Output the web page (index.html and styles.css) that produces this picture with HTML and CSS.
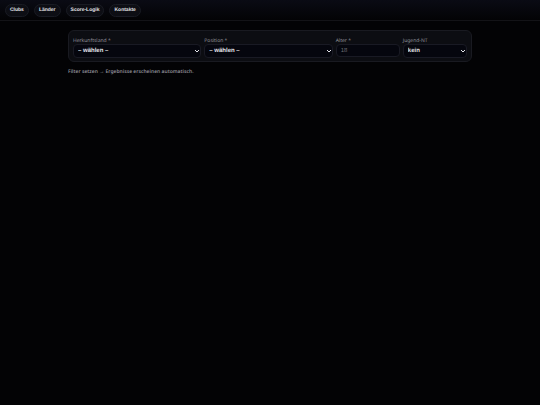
FILE: index.html
```html
<!DOCTYPE html>
<html lang="de">
<head>
<meta charset="utf-8">
<meta name="viewport" content="width=device-width, initial-scale=1">
<title>Clubs</title>
<link rel="stylesheet" href="styles.css">
</head>
<body>
<header class="topbar">
  <nav class="nav">
    <button class="pill" type="button">Clubs</button>
    <button class="pill" type="button">Länder</button>
    <button class="pill" type="button">Score-Logik</button>
    <button class="pill" type="button">Kontakte</button>
  </nav>
</header>
<main class="page">
  <form class="filters">
    <div class="field">
      <label for="country">Herkunftsland *</label>
      <div class="choice">
        <select id="country"><option>– wählen –</option></select>
        <svg class="chevron" viewBox="0 0 6 4" aria-hidden="true"><path d="M1 1l2 2 2-2"/></svg>
      </div>
    </div>
    <div class="field">
      <label for="position">Position *</label>
      <div class="choice">
        <select id="position"><option>– wählen –</option></select>
        <svg class="chevron" viewBox="0 0 6 4" aria-hidden="true"><path d="M1 1l2 2 2-2"/></svg>
      </div>
    </div>
    <div class="field">
      <label for="age">Alter *</label>
      <input id="age" type="text" inputmode="numeric" placeholder="18">
    </div>
    <div class="field">
      <label for="youth">Jugend-NT</label>
      <div class="choice">
        <select id="youth"><option>kein</option></select>
        <svg class="chevron" viewBox="0 0 6 4" aria-hidden="true"><path d="M1 1l2 2 2-2"/></svg>
      </div>
    </div>
  </form>
  <p class="hint">Filter setzen → Ergebnisse erscheinen automatisch.</p>
</main>
</body>
</html>
```

FILE: styles.css
```css
* {
  box-sizing: border-box;
}

body {
  margin: 0;
  min-height: 100vh;
  background: #030305;
  color: #e4e4ea;
  font-family: "Noto Sans", sans-serif;
  text-rendering: geometricPrecision;
}

.topbar {
  padding: 4px 5px 3px;
  border-bottom: 1px solid #131317;
  background: linear-gradient(#0a0b14, #030305);
}

.nav {
  display: flex;
  gap: 5px;
}

.pill {
  height: 13px;
  padding: 0 4px;
  border: 1px solid #191b23;
  border-radius: 7px;
  background: #0d0e14;
  color: #e4e4ea;
  font: bold 5px/11px "Liberation Sans", sans-serif;
  text-rendering: inherit;
}

.page {
  max-width: 404px;
  margin: 9px auto 0;
}

.filters {
  display: grid;
  grid-template-columns: 2fr 2fr 1fr 1fr;
  gap: 3px;
  padding: 7px 4px 3px;
  border: 1px solid #191a21;
  border-radius: 6px;
  background: #0c0d12;
}

.field {
  min-width: 0;
}

.field label {
  display: block;
  color: #93939c;
  font-size: 5px;
  line-height: 6px;
}

.choice {
  position: relative;
}

select,
input {
  display: block;
  width: 100%;
  height: 13px;
  margin: 0;
  padding: 0 4px;
  border: 1px solid #191a24;
  border-radius: 4px;
  outline: 0;
  background: #05060e;
  color: #e4e4ea;
  font: 6px/11px "Liberation Sans", sans-serif;
  text-rendering: inherit;
  appearance: none;
}

select {
  height: 14px;
  font-weight: bold;
}

input::placeholder {
  color: #696970;
}

.chevron {
  position: absolute;
  top: 5px;
  right: 1px;
  width: 6px;
  height: 4px;
  fill: none;
  stroke: #e4e4ea;
  pointer-events: none;
}

.hint {
  margin: 6px 0 0;
  color: #8c8c95;
  font-size: 5px;
  font-weight: 600;
  line-height: 8px;
}
```
